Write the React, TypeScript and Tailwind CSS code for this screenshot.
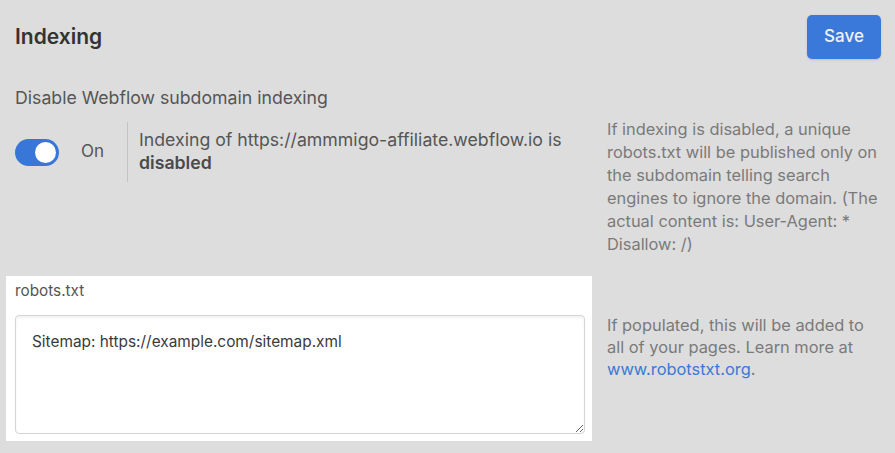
import { useState } from 'react';

export default function App() {
  const [enabled, setEnabled] = useState(true);
  const [robots, setRobots] = useState('Sitemap: https://example.com/sitemap.xml');

  return (
    <div
      className="w-full h-[453px] bg-[#dddddd] text-[16px] overflow-hidden"
      style={{ fontFamily: 'Inter, "Noto Sans", sans-serif' }}
    >
      {/* Header */}
      <div className="flex items-center justify-between pl-[15px] pr-[14px] pt-[15px]">
        <h1 className="text-[21px] font-semibold text-[#333333]">Indexing</h1>
        <button className="h-[44px] w-[74px] rounded-[5px] bg-[#3a78d9] text-[17px] font-medium text-[#eef2fb] shadow-sm">
          Save
        </button>
      </div>

      {/* Subdomain indexing */}
      <div className="pl-[15px] pt-[27px] text-[17.7px] leading-[24px] text-[#555555]">
        Disable Webflow subdomain indexing
      </div>
      <div className="mt-[8px] grid grid-cols-[592px_1fr]">
        <div className="flex items-start pl-[15px] pt-[4px]">
          <div className="flex h-[60px] items-center border-r border-[#c4c4c4] pr-[23px]">
            <button
              onClick={() => setEnabled(!enabled)}
              className={`flex h-[27px] w-[44px] items-center rounded-full px-[3px] ${
                enabled ? 'justify-end bg-[#3877d8]' : 'justify-start bg-[#b5b5b5]'
              }`}
            >
              <span className="block h-[21px] w-[21px] rounded-full bg-white" />
            </button>
            <span className="ml-[22px] text-[17px] text-[#555555]">{enabled ? 'On' : 'Off'}</span>
          </div>
          <p className="pl-[11px] pt-[6px] text-[17.7px] leading-[23px] text-[#555555]">
            Indexing of https://ammmigo-affiliate.webflow.io is
            <br />
            <span className="font-semibold text-[#4a4a4a]">{enabled ? 'disabled' : 'enabled'}</span>
          </p>
        </div>
        <p className="pl-[15px] pr-[10px] text-[16.4px] leading-[23px] text-[#7a7a7a]">
          If indexing is disabled, a unique robots.txt will be published only on the subdomain
          telling search engines to ignore the domain. (The actual content is: User-Agent: *
          Disallow: /)
        </p>
      </div>

      {/* robots.txt */}
      <div className="mt-[20px] grid grid-cols-[592px_1fr]">
        <div className="ml-[6px] bg-white pl-[9px] pr-[7px] pt-[3px] pb-[7px]">
          <label className="block text-[15.3px] leading-[24px] text-[#555555]">robots.txt</label>
          <textarea
            value={robots}
            onChange={(e) => setRobots(e.target.value)}
            className="mt-[12px] block h-[119px] w-full resize-y rounded-[4px] border border-[#d4d4d4] px-[16px] pt-[14px] text-[15.4px] leading-[24px] text-[#3a3a3a] shadow-[inset_0_2px_3px_rgba(0,0,0,0.05)] outline-none"
          />
        </div>
        <p className="pl-[15px] pr-[10px] pt-[38px] text-[16.4px] leading-[22px] text-[#7a7a7a]">
          If populated, this will be added to all of your pages. Learn more at{' '}
          <a href="#" className="text-[#3a78d9]">
            www.robotstxt.org
          </a>
          .
        </p>
      </div>
    </div>
  );
}
